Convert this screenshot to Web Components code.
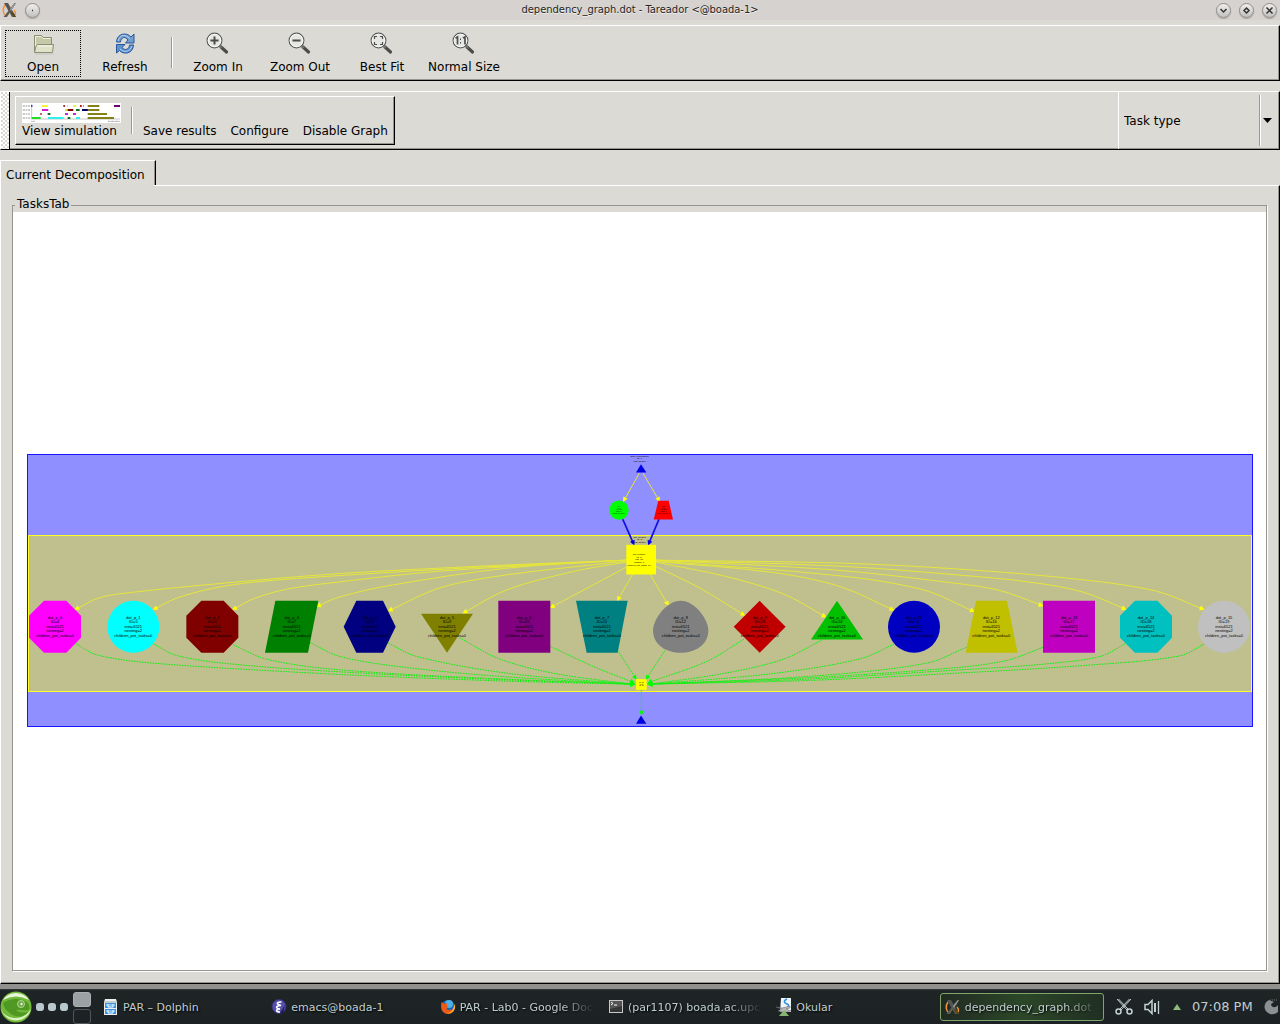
<!DOCTYPE html>
<html lang="en">
<head>
<meta charset="utf-8">
<title>dependency_graph.dot - Tareador</title>
<style>
html, body { margin: 0; height: 100%; }
body { font: 12px/16px "DejaVu Sans", sans-serif; color: #000; background: #dbdad5; }
</style>
</head>
<body>
<tareador-app></tareador-app>
<script>
const define = (name, html, init) => {
  const tpl = document.createElement('template');
  tpl.innerHTML = html;
  customElements.define(name, class extends HTMLElement {
    constructor() {
      super();
      this.attachShadow({ mode: 'open' }).append(tpl.content.cloneNode(true));
    }
    connectedCallback() { if (init) init(this, this.shadowRoot); }
  });
};

const lens = inner => `<svg width="24" height="24" viewBox="0 0 24 24"><path d="M15 15L20.500 20" stroke="#4a4d48" stroke-width="3.200" stroke-linecap="round"/><path d="M13.500 13.500l2.500 2.500" stroke="#777" stroke-width="1.500"/><circle cx="8.500" cy="8.500" r="7.400" fill="#e6e6e2" stroke="#555855" stroke-width="1.100"/><circle cx="8.500" cy="8.500" r="6.300" fill="none" stroke="#f8f8f8"/><g transform="translate(-1 -.5)">${inner}</g></svg>`;
const xmark = `<svg width="16" height="16" viewBox="0 0 16 16"><path d="M3 3C0 7 1 12 4 14M12 8c3 3 1 6-1 6" stroke="#f4923c" stroke-width="1.500" fill="none"/><path d="M2 1h4l8 14h-4z" fill="#555"/><path d="M12.500 1h1.500L5 15H1.500z" fill="#5f5c55"/><path d="M8 7l5-6h1L9 9z" fill="#999"/><path d="M9 11l3 4h2l-3-5z" fill="#5b4812"/></svg>`;

const icons = {
  x11: xmark,
  open: `<svg width="24" height="24" viewBox="0 0 24 24"><path d="M3.500 20V3.500h7l2 2h8V20z" fill="#c5c9a8" stroke="#8b8f72"/><path d="M4.500 19V4.500h5.500l2 2h7.500" fill="none" stroke="#eef0dc"/><path d="M6.500 12.500h16L21.500 20.500H3.500L5 14z" fill="#dfe2c8" stroke="#8b8f72"/><path d="M7 14h14" stroke="#f6f7ea"/><path d="M4 22h19" stroke="#c4c3bd"/></svg>`,
  refresh: `<svg width="24" height="24" viewBox="0 0 24 24"><path d="M3.500 10C4 1 14 0 18 5l3-3v9h-8.500L15 8C12 4 8 5 7.500 10z" fill="#729fcf" stroke="#27569b"/><path d="M20.500 13c-.500 9-10 10-14 5.500L3.500 21v-8.500H12L9 15.500c3 3.500 7 2 7.500-2.500z" fill="#5f92cf" stroke="#27569b"/><path d="M5 9C7 2 13 2 16.500 6.500M19 14c-2 6-8 7-12 3" stroke="#b5d0ee" fill="none"/></svg>`,
  zoomin: lens('<path d="M5.500 9h8M9.500 5v8" stroke="#4a4d4b" stroke-width="2"/>'),
  zoomout: lens('<path d="M5.500 9h8" stroke="#4a4d4b" stroke-width="2"/>'),
  fit: lens('<path d="M5.500 7.500v-2.500H8M11 5h2.500v2.500M13.500 10.500V13H11M8 13H5.500v-2.500" stroke="#4a4d4b" stroke-width="1.200" fill="none"/>'),
  one: lens('<path d="M4.500 6.500L6.500 5.500v7.500M12 6.500l2-1v7.500" stroke="#4a4d4b" stroke-width="1.700" fill="none"/><path d="M9 7h1v1.500H9zM9 10.500h1V12H9z" fill="#4a4d4b"/>'),
  dolphin: `<svg width="16" height="16" viewBox="0 0 16 16"><path d="M2 0h11l1 3v13H1V3z" fill="#eceff0"/><path d="M1 3h13" stroke="#9aa"/><path d="M2 4h11v5H2zM2 10h11v5H2z" fill="#3d92e0"/><path d="M3 5h9v2H3zM3 11h9v2H3z" fill="#7cc0f7"/><path d="M5 5v3h5V5M5 11v3h5v-3" fill="none" stroke="#fff"/></svg>`,
  emacs: `<svg width="16" height="16" viewBox="0 0 16 16"><circle cx="8" cy="7.500" r="7" fill="#5750a8" stroke="#352f7b"/><path d="M10.500 3C8 2.500 5 4 7 5.500l3 1C6 6.500 4 8.500 7 9.500l2 .500c-4 0-5 3 0 3" fill="none" stroke="#fff" stroke-width="1.500"/><path d="M9 14l5-8-2 8z" fill="#211b58"/></svg>`,
  firefox: `<svg width="16" height="16" viewBox="0 0 16 16"><circle cx="8" cy="8" r="7" fill="#1867b5"/><circle cx="9" cy="5" r="4" fill="#4bb1e6"/><path d="M1.500 3C0 10 3 15 8 15c5 0 8-5 6.500-10-.500 4-3 7-6 6-3-.500-2-3 0-3-2-1-2-2-1-4-2 0-3 1-3 1z" fill="#ee5a16"/><path d="M15 5c1 6-3 10-8 9.500 4-1 6-3 6.500-6z" fill="#fdbb2b"/></svg>`,
  term: `<svg width="16" height="16" viewBox="0 0 16 16"><rect x="1.500" y="1.500" width="13" height="12" fill="#343434" stroke="#c8c8c8"/><path d="M2 2h12v5L2 10z" fill="#555"/><path d="M3 3l2 1.500L3 6M6 6h3" stroke="#fff" fill="none"/></svg>`,
  okular: `<svg width="16" height="20" viewBox="0 0 16 20"><path d="M5 1h10v14H4z" fill="#eef5fb"/><path d="M11 2C7 4 8 6 11 7c3 1 1 4-1 4" stroke="#2d8bd8" stroke-width="1.500" fill="none"/><path d="M0 10l6 1 8-2v2l-4 1 5 2-6 1-7-1 4-2z" fill="#b8b8b8" stroke="#666" stroke-width=".500"/><path d="M8 13l5 6H3z" fill="#86b56f"/></svg>`,
  cut: `<svg width="18" height="18" viewBox="0 0 18 18" fill="none" stroke="#c3d0d2"><path d="M2 1l10 11M3.500 1L13 11M16 1L6 12M14.500 1L5 11" stroke-width="1"/><circle cx="3.500" cy="13.500" r="2.500" stroke-width="1.500"/><circle cx="14.500" cy="13.500" r="2.500" stroke-width="1.500"/></svg>`,
  sound: `<svg width="18" height="16" viewBox="0 0 18 16" fill="none" stroke="#c3d0d2"><path d="M1 5.500h3l4-4v13l-4-4H1z" stroke-width="1.500"/><path d="M11 4v9" stroke-width="2"/><path d="M14.500 2v13" stroke-width="1.300"/></svg>`,
  up: `<svg width="8" height="6" viewBox="0 0 8 6"><path d="M4 0l4 6H0z" fill="#8fbb7c"/></svg>`,
  swirl: `<svg width="14" height="16" viewBox="0 0 14 16"><path d="M5 1C0 3-1 10 3 13c4 4 9 2 11 0V6c-3 4-7 2-7-1l3-2z" fill="#8b9092"/><path d="M6 1h8" stroke="#777" stroke-dasharray="1 1"/></svg>`,
  suse: `<svg width="32" height="32" viewBox="0 0 32 32"><circle cx="16" cy="16" r="15.500" fill="#72b839"/><path d="M1 18A15.500 15.500 0 0 0 31 18Q24 28 14 27T1 18z" fill="#d9f2bd"/><path d="M3 9A15.500 15.500 0 0 1 29 9Q16 2 3 9z" fill="#e7f5da"/><path d="M3 12Q14 5 25 10c4 2 5 5 4 9-5 1-9-1-13 0 3 3 8 3 12 2-3 5-12 6-17 2S4 17 3 12z" fill="#4f9821"/><circle cx="21" cy="13" r="3.500" fill="#6aa843" stroke="#b5d99a"/><circle cx="21.500" cy="13" r="1.200" fill="#e8f5dd"/></svg>`
};

define('ui-icon', `<style>:host{display:block;line-height:0}</style>`, (el, root) => {
  root.innerHTML += icons[el.getAttribute('name')];
});

define('window-button', `<style>
:host{display:block}
button{all:unset;box-sizing:border-box;display:grid;place-items:center;width:15px;height:15px;border-radius:50%;background:linear-gradient(#f0efee,#c2c0be);border:1px solid #8f8c89;box-shadow:0 1px 1px #aaa6a2}
svg{display:block}
</style><button></button>`, (el, root) => {
  const b = root.querySelector('button');
  b.setAttribute('aria-label', el.getAttribute('label'));
  b.innerHTML = `<svg width="11" height="11" viewBox="0 0 11 11"><path d="${el.getAttribute('glyph')}" fill="none" stroke="#333" stroke-width="1.500"/></svg>`;
});

define('title-bar', `<style>
:host{display:grid;grid-template-columns:64px 1fr 64px;align-items:center;height:20px;background:#d6d2cf;color:#222;font-size:11px;font-family:"DejaVu Sans Condensed","DejaVu Sans",sans-serif;text-shadow:0 1px 0 #f2f0ee}
h1{margin:0;font:inherit;text-align:center;white-space:nowrap}
div{display:flex;gap:8px;padding-left:2px}
.r{justify-content:flex-end;padding:0 3px 0 0}
.l{align-items:center;gap:7px}
</style>
<div class="l"><ui-icon name="x11"></ui-icon><window-button label="Pin" glyph="M5 5.500h1"></window-button></div>
<h1><slot></slot></h1>
<div class="r"><window-button label="Minimize" glyph="M2.500 4l3 3 3-3"></window-button><window-button label="Maximize" glyph="M5.500 3L8 5.500 5.500 8 3 5.500z"></window-button><window-button label="Close" glyph="M2.500 2.500l6 6M8.500 2.500l-6 6"></window-button></div>`);

define('tool-button', `<style>
:host{display:flex;width:82px}
button{all:unset;box-sizing:border-box;flex:1;display:flex;flex-direction:column;align-items:center;gap:3px;margin:4px 3px;height:47px;padding-top:1px;border:1px solid transparent;white-space:nowrap}
.icon{line-height:0}
:host([focused]) button{border:1px dotted #000}
</style><button><div class="icon"></div><span><slot></slot></span></button>`, (el, root) => {
  root.querySelector('.icon').innerHTML = icons[el.getAttribute('icon')];
});

define('groove-line', `<style>:host{display:block;width:1px;border-left:1px solid #9b9990;background:#fff}</style>`);

define('main-toolbar', `<style>
:host{display:flex;box-sizing:border-box;height:56px;padding-left:1px;border:1px solid;border-color:#fff #000 #000 #fff;box-shadow:inset -1px -1px #97958d;overflow:hidden}
groove-line{margin:11px 4px 12px 5px}
</style>
<tool-button icon="open" focused>Open</tool-button>
<tool-button icon="refresh">Refresh</tool-button>
<groove-line></groove-line>
<tool-button icon="zoomin">Zoom In</tool-button>
<tool-button icon="zoomout">Zoom Out</tool-button>
<tool-button icon="fit">Best Fit</tool-button>
<tool-button icon="one">Normal Size</tool-button>`);

/* Miniature of the simulated schedule: [colour, row, start, end] */
const spans = [['#0000a0',0,94,97],['#f6f63a',0,126,144],['#a52a2a',0,190,195],['#c0c080',0,201,203],['#f0f040',0,219,229],['#b01010',0,240,245],['#777',0,249,251],['#828218',0,263,298],['#700070',0,342,360],['#d020d0',1,126,145],['#e0e030',1,195,203],['#800000',1,203,220],['#107020',1,228,239],['#000060',1,246,264],['#828218',1,263,298],['#b01818',2,121,125],['#107020',2,143,151],['#d020d0',2,195,204],['#d020d0',2,219,228],['#828218',2,263,321],['#20e020',3,95,122],['#30f0f0',3,144,191],['#107020',3,203,211],['#30f0f0',3,228,240],['#828218',3,263,342]];
define('sim-thumbnail', `<style>:host{display:block;line-height:0}</style>
<svg width="99" height="20" viewBox="66 309 297 60"><path fill="#fff" d="M66 309h297v60H66z"/>
<path d="M95 312v45h265" fill="none" stroke="#aaa" stroke-width="2"/>
<path d="M68 318h22M68 330h22M68 342h22M68 354h22" stroke="#999" stroke-width="3" stroke-dasharray="8 2 3 2"/>
<path d="M94 364h10M324 364h36" stroke="#999" stroke-width="3" stroke-dasharray="3 1"/>
${spans.map(([c, r, a, b]) => `<path fill="${c}" d="M${a} ${315 + r * 12}H${b}v6H${a}z"/>`).join('')}</svg>`);

define('simulation-toolbar', `<style>
:host{display:flex;box-sizing:border-box;height:59px;border:1px solid;border-color:#fff #000 #000 #fff;box-shadow:inset -1px -1px #97958d}
.grip{width:8px;border-right:1px solid #000;background:repeating-conic-gradient(#fff 0 25%,#d9d7d2 0 50%) 0 0/4px 4px}
.box{display:flex;align-items:flex-end;margin:4px 0 4px 5px;border:1px solid;border-color:#fff #000 #000 #fff;box-shadow:inset -1px -1px #97958d;box-sizing:border-box;padding:0 6px 5px 6px;height:49px}
button{all:unset;white-space:nowrap}
.view{display:flex;flex-direction:column;margin-right:10px}
groove-line{height:27px;margin:0 10px 5px 0}
.texts{display:flex;gap:14px}
.type{display:grid;grid-template-columns:1fr 1px 19px;width:160px;margin-left:auto;border-left:1px solid #fff}
select{appearance:none;grid-area:1/1/2/4;border:0;background:none;font:inherit;color:inherit;padding:0 24px 0 5px;margin:0}
.type groove-line{grid-area:1/2;height:auto;margin:3px 0 3px 0;pointer-events:none}
.type svg{grid-area:1/3;place-self:center start;margin-left:3px;pointer-events:none}
</style>
<div class="grip"></div>
<div class="box">
<button class="view"><sim-thumbnail></sim-thumbnail><span>View simulation</span></button>
<groove-line></groove-line>
<div class="texts"><button>Save results</button><button>Configure</button><button>Disable Graph</button></div>
</div>
<div class="type"><select aria-label="Task type"><option>Task type</option></select><groove-line></groove-line>
<svg width="9" height="5" viewBox="0 0 9 5"><path d="M0 0h9L4.500 5z"/></svg></div>`);

define('tab-panel', `<style>
:host{display:flex;flex-direction:column;min-height:0}
.tab{all:unset;box-sizing:border-box;align-self:flex-start;min-width:156px;height:25px;padding:3px 5px 0 5px;border:1px solid;border-color:#fff #000 transparent #fff;border-bottom:0;box-shadow:inset -1px 0 #97958d;position:relative}
.page{flex:1;display:flex;min-height:0;border:1px solid;border-color:#fff #000 #000 #fff;box-shadow:inset -1px -1px #97958d;padding:12px 12px 12px 11px}
.tab::after{content:"";position:absolute;left:0;right:1px;bottom:-1px;height:1px;background:#dbdad5}
fieldset{flex:1;display:flex;min-width:0;min-height:0;margin:0;padding:0;border:1px solid #97958d;box-shadow:1px 1px #fff}
legend{padding:0 2px;margin-left:2px;height:14px;line-height:13px}
.view{flex:1;display:flex;background:#fff;min-width:0;min-height:0}
::slotted(*){flex:1;min-width:0}
</style>
<button class="tab" role="tab">Current Decomposition</button>
<div class="page"><fieldset><legend>TasksTab</legend><div class="view"><slot></slot></div></fieldset></div>`);

/* Edges run through every listed point as a smooth curve. */
const curve = p => {
  let d = `M${p[0]}`;
  const len = (u, v) => Math.hypot(u[0] - v[0], u[1] - v[1]);
  for (let i = 0; i < p.length - 1; i++) {
    const a = p[i - 1] || p[i], b = p[i], c = p[i + 1], e = p[i + 2] || c;
    const bc = len(b, c), h = bc / (len(a, b) + bc) / 3, g = bc / (bc + len(c, e)) / 3;
    d += `C${Math.round(b[0] + (c[0] - a[0]) * h)} ${Math.round(b[1] + (c[1] - a[1]) * h)} ${Math.round(c[0] - (e[0] - b[0]) * g)} ${Math.round(c[1] - (e[1] - b[1]) * g)} ${c}`;
  }
  return d;
};
const arrow = (p, size) => {
  const [x, y] = p[p.length - 1], [u, v] = p[p.length - 2];
  const t = Math.atan2(y - v, x - u), c = Math.cos(t) * size, s = Math.sin(t) * size;
  return `M${Math.round(x + c / 2)} ${Math.round(y + s / 2)}L${Math.round(x - c / 2 - s / 2)} ${Math.round(y - s / 2 + c / 2)} ${Math.round(x - c / 2 + s / 2)} ${Math.round(y - s / 2 - c / 2)}z`;
};
const edge = (p, cls, size = 15) => `<path class="${cls}" d="${curve(p)}"/><path class="${cls} head" d="${arrow(p, size)}"/>`;
const label = (x, y, step, size, lines) => lines.map((t, i) => `<text x="${x}" y="${y + Math.round(i * step)}" font-size="${size}">${t}</text>`).join('');

const L = [1879, 1681], R = [1968, 1681];
const out = [
  [L,[1440,1699],[1020,1721],[660,1751],[400,1777],[300,1793],[230,1827]],
  [L,[1440,1702],[1020,1727],[760,1747],[640,1765],[530,1795],[465,1827]],
  [L,[1320,1714],[1020,1746],[860,1768],[760,1797],[703,1827]],
  [L,[1520,1705],[1180,1755],[1020,1791],[955,1818]],
  [[1879,1684],[1520,1725],[1320,1764],[1170,1831]],
  [[1879,1687],[1720,1715],[1520,1770],[1394,1837]],
  [[1879,1702],[1780,1755],[1656,1821]],
  [[1898,1723],[1855,1798]],
  [[1950,1723],[2002,1812]],
  [[1968,1700],[2100,1765],[2230,1844]],
  [[1968,1687],[2170,1728],[2350,1782],[2473,1849]],
  [[1968,1685],[2320,1718],[2520,1760],[2677,1829]],
  [[1968,1683],[2520,1728],[2770,1770],[2918,1833]],
  [R,[2500,1710],[2880,1752],[3000,1772],[3124,1816]],
  [R,[2500,1698],[2880,1726],[3090,1747],[3250,1777],[3373,1827]],
  [R,[2500,1689],[2880,1708],[3250,1740],[3470,1774],[3607,1827]]
];
const l = [1898, 2053], r = [1949, 2053];
const back = [
  [[228,1932],[290,1965],[460,1990],[1020,2024],[1520,2044],l],
  [[460,1932],[530,1967],[690,1992],[1020,2016],[1520,2040],l],
  [[700,1935],[800,1978],[1020,2010],[1520,2038],l],
  [[930,1928],[1020,1970],[1220,2003],[1520,2031],l],
  [[1165,1930],[1250,1970],[1520,2020],l],
  [[1378,1913],[1500,1978],[1670,2022],l],
  [[1652,1940],[1780,2000],[1898,2047]],
  [[1853,1952],[1906,2034]],
  [[1995,1952],[1941,2034]],
  [[2232,1918],[2120,1985],[1949,2047]],
  [[2465,1921],[2350,1978],[2170,2021],r],
  [[2682,1933],[2580,1977],[2320,2021],r],
  [[2900,1942],[2780,1990],[2420,2030],r],
  [[3130,1942],[3020,1982],[2850,2005],[2420,2034],r],
  [[3375,1932],[3300,1970],[3120,1994],[2850,2012],[2420,2038],r],
  [[3612,1933],[3540,1968],[3250,1997],[2850,2021],[2420,2042],r]
];
const oct = x => `<path d="M${x-33} 1803h67l44 45v66l-44 45h-67l-45-45v-66z"/>`;
const dot = x => `<circle cx="${x}" cy="1881" r="78"/>`;
const box = x => `<path d="M${x-78} 1803h156v156h-156z"/>`;
const nodes = [
  [165,'#ff00ff',oct(165)], [400,'#00ffff',dot(400)], [637,'#800000',oct(637)],
  [875,'#008000','<path d="M826 1803h129l-31 156h-129z"/>'],
  [1110,'#000080','<path d="M1069 1803h80l38 78-38 78h-80l-38-78z"/>'],
  [1341,'#808000','<path d="M1263 1842h156l-78 117z"/>'],
  [1573,'#800080',box(1573)],
  [1806,'#008080','<path d="M1728 1803h155l-30 156h-93z"/>'],
  [2042,'#808080','<path d="M2042 1803C2085 1803 2125 1860 2125 1892C2125 1935 2085 1959 2042 1959S1959 1935 1959 1892C1959 1860 1999 1803 2042 1803z"/>'],
  [2279,'#c00000','<path d="M2279 1803l78 78-78 78-78-78z"/>'],
  [2511,'#00c000','<path d="M2511 1803l78 116h-156z"/>'],
  [2742,'#0000c0',dot(2742)],
  [2974,'#c0c000','<path d="M2928 1803h93l32 156h-156z"/>'],
  [3207,'#c000c0',box(3207)], [3438,'#00c0c0',oct(3438)], [3672,'#c0c0c0',dot(3672)]
];
define('dependency-graph', `<style>
:host{display:flex}
svg{display:block;width:100%;height:100%}
text{font-family:"Liberation Sans",sans-serif;text-anchor:middle;fill:#000}
path.y,path.g,path.b{fill:none;stroke:#e6e63c;stroke-width:3}
path.g{stroke:#10f010;stroke-width:3;stroke-dasharray:5 3}
path.b{stroke:#1010e0;stroke-width:5}
path.y.head{fill:#ff0;stroke:none}path.g.head{fill:#0f0;stroke:none}path.b.head{fill:#0000e0;stroke:none}
rect{shape-rendering:crispEdges}
</style>
<svg viewBox="39 638 3759 2271" role="img" aria-label="Task dependency graph">
<rect x="82" y="1365" width="3676" height="816" fill="#8f8fff" stroke="#1616ff" stroke-width="3"/>
<rect x="85" y="1606" width="3670" height="468" fill="#c0c08f" stroke="#ffff20" stroke-width="3"/>
${edge([[1918,1420],[1873,1500]],'y')}${edge([[1929,1420],[1976,1500]],'y')}
${out.map(p => edge(p,'y')).join('')}${back.map(p => edge(p,'g')).join('')}
${edge([[1924,2070],[1924,2140]],'g')}
${edge([[1868,1558],[1900,1630]],'b')}${edge([[1977,1558],[1947,1630]],'b')}
<path d="M1923 1393l16 25h-31zM1923 2147l16 25h-31z" fill="#0000e0"/>
<circle cx="1857" cy="1531" r="29" fill="#0f0"/><path d="M1975 1503h31l13 56h-58z" fill="#f00"/>
<path d="M1879 1635h89v89h-89z" fill="#ff0"/><path d="M1908 2038h32v32h-32z" fill="#ff0"/>
${nodes.map(([x, c, s], i) => `<g fill="${c}">${s}</g>` + label(x, 1857, 13.4, 12, ['dot_p_' + i, 'ID=' + (i + 4), 'inst=6521', 'nesting=2', 'children_pot_tasks=0'])).join('')}
${label(1919,1371,7.5,7,['start_computation','ID=0','inst=88 306'])}
${label(1919,1614,7.5,7,['dot_product','ID=3','inst=88 306'])}
${label(1917,1666,8,7,['dot_product','ID=3','inst=78','nesting=1','children_pot_tasks=16'])}
${label(1857,1522,5,4,['init_A','ID=1','inst=6521','nesting=1','children_pot_tasks=0'])}
${label(1990,1522,5,4,['init_B','ID=2','inst=6521','nesting=1','children_pot_tasks=0'])}
${label(1924,2050,5,4,['dot_end','ID=20','inst=12'])}
</svg>`);

define('task-item', `<style>
:host{display:flex;min-width:0}
button{all:unset;box-sizing:border-box;flex:1;min-width:0;display:flex;align-items:center;gap:4px;height:28px;padding:0 4px;border:1px solid transparent;border-radius:3px;color:#c0cdcf;text-shadow:1px 1px 2px #000}
:host([active]) button{border-color:#7da56c;background:linear-gradient(90deg,#202a22,#2c4728,#202f22)}
.icon{line-height:0;flex:none}
.text{flex:1;min-width:0;overflow:hidden;white-space:nowrap;padding-top:3px}
:host([fade]) .text{mask-image:linear-gradient(90deg,#000 75%,transparent)}
</style><button><span class="icon"></span><span class="text"><slot></slot></span></button>`, (el, root) => {
  root.querySelector('.icon').innerHTML = icons[el.getAttribute('icon')];
});

define('task-bar', `<style>
:host{display:flex;align-items:center;height:35px;border-top:5px solid #92908c;background:linear-gradient(#30393a,#1f2425 2px,#1c2224);font-size:11px;color:#c0cdcf}
.dots{display:flex;gap:4px;margin:0 5px 0 4px}
.dots i{width:8px;height:8px;border-radius:3px;background:#b9c9ce}
.pager{display:flex;flex-direction:column;gap:2px;width:18px;margin-right:7px;padding-top:3px}
.pager i{box-sizing:border-box;height:15px;border-radius:3px;border:1px solid #4f585a}
.pager i:first-child{background:#9ba2a3;border-color:#a9b0b0}
.items{flex:1;min-width:0;display:grid;grid-template-columns:repeat(6,minmax(0,1fr));gap:4px}
.tray{display:flex;align-items:center;gap:11px;padding-left:11px;width:165px;flex:none}
time{font-size:13px;white-space:nowrap}
</style>
<ui-icon name="suse"></ui-icon>
<div class="dots"><i></i><i></i><i></i></div>
<div class="pager"><i></i><i></i></div>
<div class="items">
<task-item icon="dolphin">PAR – Dolphin</task-item>
<task-item icon="emacs">emacs@boada-1</task-item>
<task-item icon="firefox" fade>PAR - Lab0 - Google Docs</task-item>
<task-item icon="term" fade>(par1107) boada.ac.upc.edu</task-item>
<task-item icon="okular">Okular</task-item>
<task-item icon="x11" fade active>dependency_graph.dot - Tareador</task-item>
</div>
<div class="tray"><ui-icon name="cut"></ui-icon><ui-icon name="sound"></ui-icon><ui-icon name="up"></ui-icon><time>07:08 PM</time><ui-icon name="swirl"></ui-icon></div>`);

define('tareador-app', `<style>
:host{display:flex;flex-direction:column;height:100vh;min-height:480px;background:#dbdad5}
main-toolbar{margin-top:5px}
simulation-toolbar,tab-panel{margin-top:10px}
tab-panel{flex:1}
title-bar,main-toolbar,simulation-toolbar,task-bar{flex:none}
</style>
<title-bar>dependency_graph.dot - Tareador &lt;@boada-1&gt;</title-bar>
<main-toolbar></main-toolbar>
<simulation-toolbar></simulation-toolbar>
<tab-panel><dependency-graph></dependency-graph></tab-panel>
<task-bar></task-bar>`);
</script>
</body>
</html>
